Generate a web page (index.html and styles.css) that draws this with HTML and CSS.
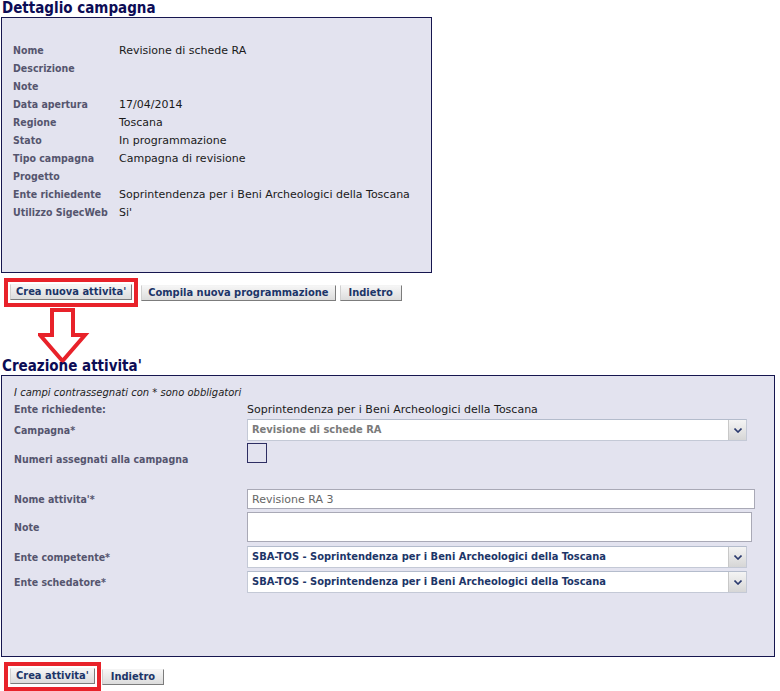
FILE: index.html
```html
<!DOCTYPE html>
<html lang="it">
<head>
    <meta charset="UTF-8">
    <title>Dettaglio campagna</title>
    <link rel="stylesheet" href="styles.css">
</head>
<body>
    <h2 class="section-title">Dettaglio campagna</h2>
    <div class="panel panel-detail">
        <dl class="detail-list">
            <dt>Nome</dt><dd>Revisione di schede RA</dd>
            <dt>Descrizione</dt><dd></dd>
            <dt>Note</dt><dd></dd>
            <dt>Data apertura</dt><dd>17/04/2014</dd>
            <dt>Regione</dt><dd>Toscana</dd>
            <dt>Stato</dt><dd>In programmazione</dd>
            <dt>Tipo campagna</dt><dd>Campagna di revisione</dd>
            <dt>Progetto</dt><dd></dd>
            <dt>Ente richiedente</dt><dd>Soprintendenza per i Beni Archeologici della Toscana</dd>
            <dt>Utilizzo SigecWeb</dt><dd>Si'</dd>
        </dl>
    </div>
    <div class="actions actions-top">
        <span class="mark"><button class="btn">Crea nuova attivita'</button></span>
        <button class="btn">Compila nuova programmazione</button>
        <button class="btn btn-back">Indietro</button>
    </div>
    <div class="arrow">
        <svg width="52" height="58" viewBox="0 0 52 58">
            <path d="M14 3 H35 V28 H47 L24.5 54 L2 28 H14 Z" fill="none" stroke="#e8222a" stroke-width="4" stroke-linejoin="miter"/>
        </svg>
    </div>
    <h2 class="section-title title-create">Creazione attivita'</h2>
    <form class="panel panel-form">
        <p class="hint">I campi contrassegnati con * sono obbligatori</p>
        <div class="row row-text">
            <label>Ente richiedente:</label>
            <span class="value">Soprintendenza per i Beni Archeologici della Toscana</span>
        </div>
        <div class="row row-campagna">
            <label>Campagna*</label>
            <div class="combo combo-disabled">
                <span class="combo-text">Revisione di schede RA</span>
                <span class="combo-btn"><svg width="8" height="5" viewBox="0 0 8 5"><path d="M0.5 0.5 L4 4 L7.5 0.5" fill="none" stroke="#2b3a6e" stroke-width="1.6"/></svg></span>
            </div>
        </div>
        <div class="row row-numeri">
            <label>Numeri assegnati alla campagna</label>
            <span class="box"></span>
        </div>
        <div class="row row-nome">
            <label>Nome attivita'*</label>
            <input class="field field-nome" type="text" value="Revisione RA 3">
        </div>
        <div class="row row-note">
            <label>Note</label>
            <textarea class="field field-note"></textarea>
        </div>
        <div class="row row-ente">
            <label>Ente competente*</label>
            <div class="combo">
                <span class="combo-text">SBA-TOS - Soprintendenza per i Beni Archeologici della Toscana</span>
                <span class="combo-btn"><svg width="8" height="5" viewBox="0 0 8 5"><path d="M0.5 0.5 L4 4 L7.5 0.5" fill="none" stroke="#2b3a6e" stroke-width="1.6"/></svg></span>
            </div>
        </div>
        <div class="row row-ente2">
            <label>Ente schedatore*</label>
            <div class="combo">
                <span class="combo-text">SBA-TOS - Soprintendenza per i Beni Archeologici della Toscana</span>
                <span class="combo-btn"><svg width="8" height="5" viewBox="0 0 8 5"><path d="M0.5 0.5 L4 4 L7.5 0.5" fill="none" stroke="#2b3a6e" stroke-width="1.6"/></svg></span>
            </div>
        </div>
    </form>
    <div class="actions actions-bottom">
        <span class="mark"><button class="btn">Crea attivita'</button></span>
        <button class="btn btn-back">Indietro</button>
    </div>
</body>
</html>
```

FILE: styles.css
```css
body{margin:0;background:#fff;font-family:"DejaVu Sans",Verdana,sans-serif;font-size:11px;color:#111;}
.section-title{margin:0 0 0 2px;font-family:"DejaVu Sans Condensed","DejaVu Sans",sans-serif;font-size:15px;line-height:17px;font-weight:bold;color:#0c0c55;}
.panel{background:#e3e3ef;border:1px solid #16164f;margin-left:1px;box-sizing:border-box;}
.panel-detail{width:431px;height:256px;padding:23px 0 0 11px;}
.detail-list{display:grid;grid-template-columns:106px 1fr;grid-auto-rows:18px;align-items:center;margin:0;}
.detail-list dt{font-family:"DejaVu Sans Condensed","DejaVu Sans",sans-serif;font-weight:bold;color:#55556e;font-size:10.5px;}
.detail-list dd{margin:0;color:#1a1a1a;}

.actions{display:flex;align-items:center;}
.actions-top{margin-top:5px;margin-left:4px;}
.actions-bottom{margin-top:5px;margin-left:4px;}
.mark{display:inline-flex;border:4px solid #e8222a;padding:2px 2px 3px 2px;}
.actions-top .mark{margin-right:3px;}
.actions-bottom .mark{margin-right:1px;}
.btn{font-family:"DejaVu Sans Condensed","DejaVu Sans",sans-serif;font-size:11px;font-weight:bold;color:#1c3568;height:16px;line-height:12px;padding:0 6px;margin:0 4px 0 0;background:linear-gradient(#f6f6f6,#dcdcdc);border:1px solid;border-color:#f4f4f4 #7c7c7c #7c7c7c #d0d0d0;}
.mark .btn{margin:0;padding:0 5px;}
.btn-back{padding:0 8px;}

.arrow{height:53px;margin:0 0 0 38px;}
.arrow svg{display:block;}
.title-create{margin-top:-2px;}

.panel-form{width:774px;height:282px;padding:11px 0 0 12px;}
.hint{margin:0;font-style:italic;font-size:10px;line-height:12px;color:#222;}
.row{display:flex;align-items:center;}
.row label{width:233px;flex:none;font-family:"DejaVu Sans Condensed","DejaVu Sans",sans-serif;font-weight:bold;color:#55556e;font-size:10.5px;}
.row-text{margin-top:4px;height:12px;}
.row-campagna{margin-top:4px;}
.row-numeri{margin-top:2px;height:22px;align-items:flex-start;}
.row-numeri label{align-self:flex-end;line-height:12px;}
.row-nome{margin-top:24px;}
.row-note{margin-top:3px;}
.row-ente{margin-top:4px;}
.row-ente2{margin-top:3px;}
.value{color:#1a1a1a;}

.combo{display:flex;width:500px;height:22px;box-sizing:border-box;background:#fff;border:1px solid #c4c9d6;border-top-color:#b4bccc;}
.combo-text{flex:1;padding-left:4px;line-height:20px;font-family:"DejaVu Sans Condensed","DejaVu Sans",sans-serif;font-weight:bold;color:#1c3568;font-size:11px;}
.combo-disabled .combo-text{color:#7a7a7a;}
.combo-btn{width:17px;display:flex;align-items:center;justify-content:center;background:linear-gradient(#f4f4f4,#d6d6d6);border-left:1px solid #c8c8c8;}
.box{width:20px;height:20px;box-sizing:border-box;border:1px solid #2e2e63;}
.field{box-sizing:border-box;background:#fff;border:1px solid #a9a9b6;font-family:"DejaVu Sans",Verdana,sans-serif;font-size:11px;margin:0;}
.field-nome{width:508px;height:20px;padding:0 4px;color:#666;}
.field-note{width:505px;height:30px;resize:none;display:block;}
```
